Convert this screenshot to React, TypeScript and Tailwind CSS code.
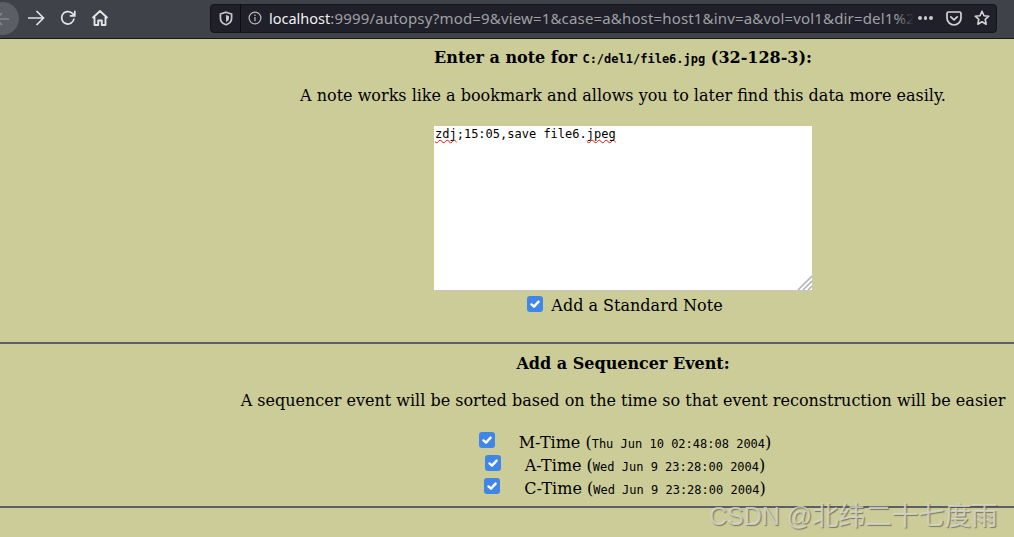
import React from "react";

const serif = "font-['DejaVu_Serif',serif]";
const mono = "font-['DejaVu_Sans_Mono',monospace]";

const Check = ({ className = "" }: { className?: string }) => (
  <span className={`inline-flex w-4 h-4 rounded-[3px] bg-[#3f86e6] items-center justify-center ${className}`}>
    <svg width="12" height="12" viewBox="0 0 12 12" fill="none" stroke="white" strokeWidth="2.4" strokeLinecap="round" strokeLinejoin="round">
      <path d="M2.5 6.4 5 8.6 9.6 3.6" />
    </svg>
  </span>
);

const Toolbar = () => (
  <div className="h-[39px] bg-[#40424a] flex items-center border-b border-[#17181c] shrink-0">
    <div className="w-[19px] h-[34px] relative overflow-hidden shrink-0">
      <div className="absolute left-[-14px] top-0 w-[33px] h-[33px] rounded-full bg-[#5c5e65]" />
      <svg className="absolute left-[-6px] top-[9px]" width="16" height="16" viewBox="0 0 16 16" fill="none" stroke="#85868b" strokeWidth="1.6">
        <path d="M15 8H2M8 2 2 8l6 6" />
      </svg>
    </div>
    <svg className="ml-[8px] -translate-y-[1px]" width="18" height="18" viewBox="0 0 18 18" fill="none" stroke="#e4e4e6" strokeWidth="1.7">
      <path d="M1 9h15M9.5 2l7 7-7 7" />
    </svg>
    <svg className="ml-[14px] -translate-y-[1px]" width="18" height="18" viewBox="0 0 18 18" fill="none" stroke="#e4e4e6" strokeWidth="1.7">
      <path d="M15 9.5A6.2 6.2 0 1 1 13 4.2L15.5 6.500" />
      <path d="M15.8 1.800v5h-5" />
    </svg>
    <svg className="ml-[14px] -translate-y-[1px]" width="18" height="18" viewBox="0 0 18 18" fill="none" stroke="#e4e4e6" strokeWidth="1.900" strokeLinejoin="round">
      <path d="M1.500 9 9 2l7.500 7M3.500 7.500V16h3.700v-4.500h3.600V16h3.700V7.500" />
    </svg>
    <div className="ml-[101px] w-[787px] h-[29px] -translate-y-[1px] bg-[#1f2029] rounded-[4px] border border-[#14151a] flex items-center">
      <svg className="ml-[8px]" width="14" height="15" viewBox="0 0 14 15" fill="none" stroke="#c8c8cc" strokeWidth="1.7">
        <path d="M7 1.200 12.600 3v4.200c0 3-2.400 5.400-5.600 6.600C3.800 12.600 1.400 10.200 1.400 7.200V3L7 1.200Z" />
        <path d="M7 4 10 5v2.500C10 9 8.800 10.200 7 11Z" fill="#c8c8cc" stroke="none" />
      </svg>
      <div className="ml-[7px] w-px h-[28px] bg-[#0c0c10]" />
      <svg className="ml-[7px]" width="14" height="14" viewBox="0 0 14 14" fill="none" stroke="#bcbcc0" strokeWidth="1.200">
        <circle cx="7" cy="7" r="5.900" />
        <path d="M7 6v4.200M7 3.600v1.300" />
      </svg>
      <div className="ml-[7px] w-[645px] relative overflow-hidden whitespace-nowrap font-['Noto_Sans',sans-serif] text-[15px] tracking-[0.16px] text-[#a0a1a6]">
        <span className="text-[#f0f0f2] text-[14.5px] tracking-normal">localhost</span>:9999/autopsy?mod=9&amp;view=1&amp;case=a&amp;host=host1&amp;inv=a&amp;vol=vol1&amp;dir=del1%2
        <div className="absolute right-0 top-0 bottom-0 w-[18px] bg-gradient-to-r from-transparent to-[#1f2029]" />
      </div>
      <span className="ml-[4px] flex gap-[2px]">
        <i className="w-[3.500px] h-[3.500px] rounded-full bg-[#c8c8cc]" />
        <i className="w-[3.500px] h-[3.500px] rounded-full bg-[#c8c8cc]" />
        <i className="w-[3.500px] h-[3.500px] rounded-full bg-[#c8c8cc]" />
      </span>
      <svg className="ml-[13px]" width="16" height="15" viewBox="0 0 16 15" fill="none" stroke="#d4d4d8" strokeWidth="1.700" strokeLinejoin="round" strokeLinecap="round">
        <path d="M2.500 1h11A1.500 1.500 0 0 1 15 2.500V7a7 7 0 0 1-14 0V2.500A1.500 1.500 0 0 1 2.500 1Z" />
        <path d="M4.800 5.800 8 8.800l3.200-3" />
      </svg>
      <svg className="ml-[12px]" width="16" height="16" viewBox="0 0 16 16" fill="none" stroke="#d4d4d8" strokeWidth="1.600" strokeLinejoin="round">
        <path d="M8 1.200 10 5.700l4.800.5-3.600 3.200 1 4.800L8 11.700l-4.200 2.500 1-4.800L1.200 6.200 6 5.700Z" />
      </svg>
    </div>
  </div>
);

const TimeRow = ({ label, time }: { label: string; time: string }) => (
  <div className="flex items-center h-[23px]">
    <Check className="-translate-y-[3px]" />
    <span className="ml-6 text-[16px]">{label} (</span>
    <span className={`${mono} text-[12px] mt-[2px]`}>{time}</span>
    <span className="text-[16px]">)</span>
  </div>
);

export default function App() {
  return (
    <div className={`w-[1014px] h-[537px] overflow-hidden bg-[#cccc99] text-black flex flex-col relative ${serif}`}>
      <Toolbar />
      <div className="pl-[232px] flex flex-col items-center text-[16px] whitespace-nowrap">
        <div className="mt-[9px] h-[20px] leading-[20px] font-bold flex items-baseline">
          Enter a note for&nbsp;<span className={`${mono} text-[12px]`}>C:/del1/file6.jpg</span>&nbsp;(32-128-3):
        </div>
        <p className="mt-[18px] h-[20px] leading-[20px]">A note works like a bookmark and allows you to later find this data more easily.</p>
        <div className={`mt-[20px] w-[378px] h-[165px] bg-white border-b border-[#c6c6c6] relative ${mono} text-[12px] leading-[14px] pl-[1px] pt-[1px]`}>
          <span className="underline decoration-wavy decoration-[#e01010] decoration-1 [text-decoration-skip-ink:none]">zdj</span>;15:05,save file6.<span className="underline decoration-wavy decoration-[#e01010] decoration-1 [text-decoration-skip-ink:none]">jpeg</span>
          <svg className="absolute right-0 bottom-0" width="15" height="15" viewBox="0 0 15 15" stroke="#b4b4b4" strokeWidth="1.600">
            <path d="M1 15 15 1M6 15l9-9M11 15l4-4" />
          </svg>
        </div>
        <div className="h-[28px] flex items-center ml-[4px] mt-[1px]">
          <Check className="-translate-y-[2px]" />
          <span className="ml-2 text-[16px]">Add a Standard Note</span>
        </div>
      </div>
      <hr className="mt-[22px] h-[2px] border-0 bg-[#5c5f66]" />
      <div className="pl-[232px] flex flex-col items-center text-[16px] whitespace-nowrap">
        <div className="mt-[10px] h-[20px] leading-[20px] font-bold">Add a Sequencer Event:</div>
        <p className="mt-[17px] h-[20px] leading-[20px]">A sequencer event will be sorted based on the time so that event reconstruction will be easier</p>
        <div className="mt-[20px] ml-[4px] flex flex-col items-center">
          <TimeRow label="M-Time" time="Thu Jun 10 02:48:08 2004" />
          <TimeRow label="A-Time" time="Wed Jun 9 23:28:00 2004" />
          <TimeRow label="C-Time" time="Wed Jun 9 23:28:00 2004" />
        </div>
      </div>
      <hr className="mt-[6px] h-[2px] border-0 bg-[#5c5f66]" />
      <div className="absolute left-[709px] top-[497px] font-['Liberation_Sans','Noto_Sans_CJK_SC',sans-serif] text-[25px] leading-[34px] whitespace-nowrap text-[#dcdcd0]/80 [text-shadow:1px_1px_1px_rgba(80,80,70,0.65)]">
        CSDN @<span className="font-['Noto_Sans_CJK_SC',sans-serif] text-[26.5px]">北纬二十七度雨</span>
      </div>
    </div>
  );
}
